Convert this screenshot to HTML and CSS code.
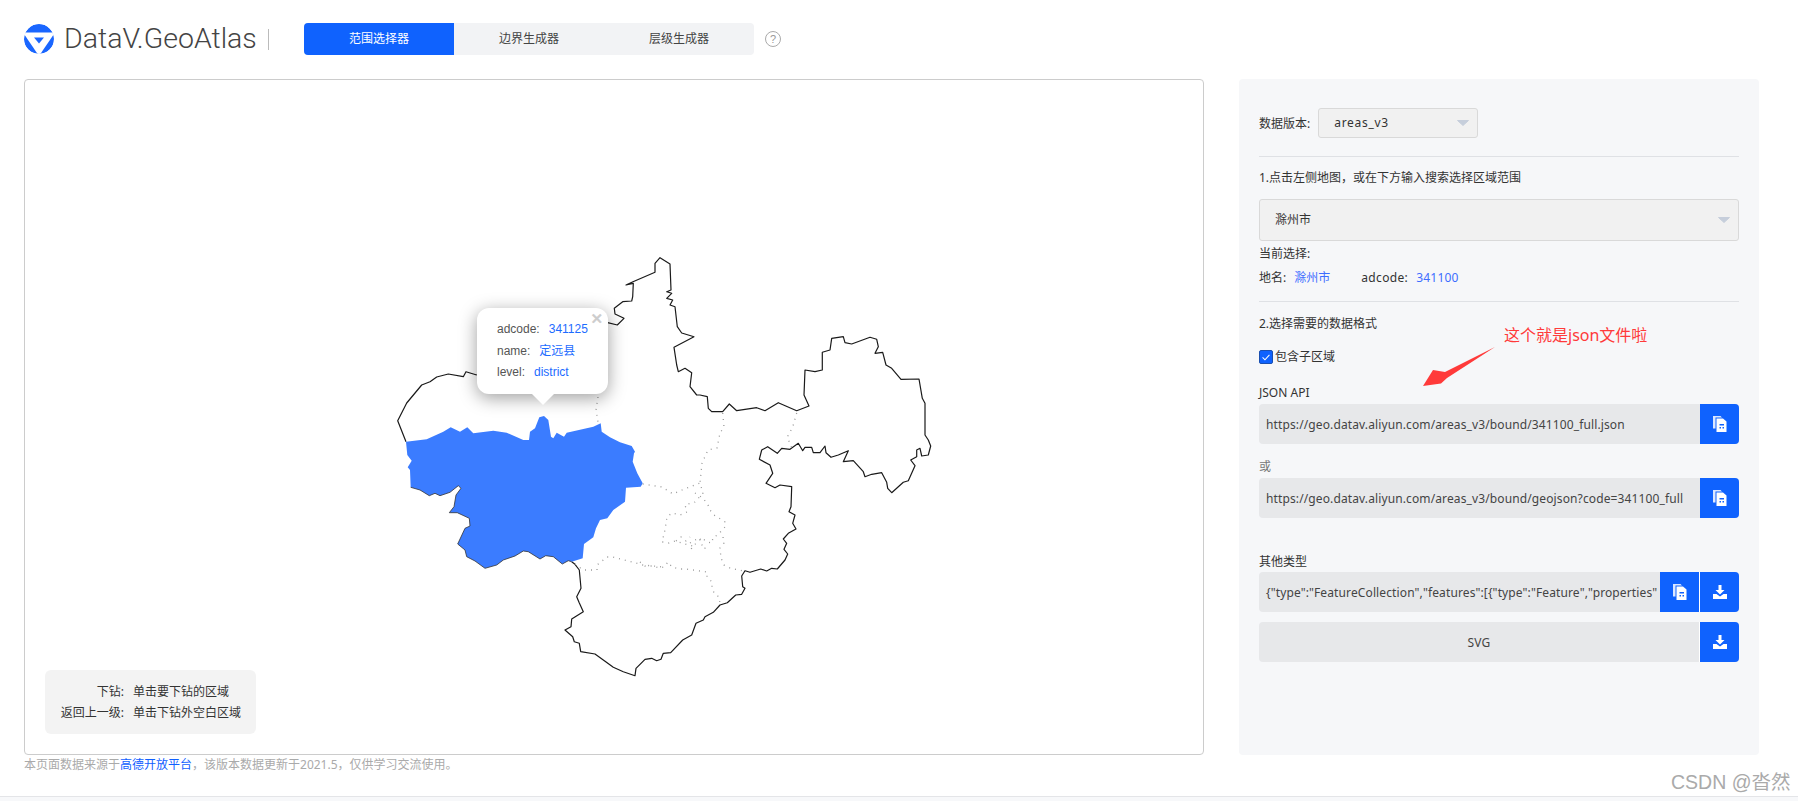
FILE: index.html
```html
<!DOCTYPE html>
<html lang="zh-CN">
<head>
<meta charset="utf-8">
<title>DataV.GeoAtlas</title>
<link rel="stylesheet" href="styles.css">
</head>
<body>
<svg class="defs" width="0" height="0" aria-hidden="true">
  <symbol id="i-copy" viewBox="0 0 14 16">
    <path d="M0 0h7.500l1.500 1.500H2.500v11H0z" fill="#dbe7ff"/>
    <path d="M3.500 2.500H10l3.500 3V16h-10z" fill="#fff"/>
    <path d="M6.500 8h4.500v1.500H6.500zM6.500 11h1.500v1.500H6.500zM9.500 11H11v1.500H9.500z" fill="#0f62fe"/>
  </symbol>
  <symbol id="i-down" viewBox="0 0 14 14">
    <path d="M5.500 0h3v5H11.500L7 9.500 2.500 5h3z" fill="#fff"/>
    <path d="M0 9h3.500L7 11.500 10.500 9H14v5H0z" fill="#fff"/>
  </symbol>
  <symbol id="i-caret" viewBox="0 0 12 6">
    <path d="M.5 .5h11L6 5.500z" fill="#c6cedb" stroke="#c6cedb" stroke-linejoin="round"/>
  </symbol>
</svg>

<header class="topbar">
  <svg class="logo" viewBox="0 0 30 30">
    <circle cx="15" cy="15" r="15" fill="#1a66ff"/>
    <path d="M-1 8.500H31L15 32z" fill="#fff"/>
    <path d="M10 13.500h10l-5 6z" fill="#1a66ff"/>
  </svg>
  <span class="brand">DataV.GeoAtlas</span>
  <span class="brand-sep"></span>
  <nav class="tabs">
    <a class="tab tab-active">范围选择器</a>
    <a class="tab">边界生成器</a>
    <a class="tab">层级生成器</a>
  </nav>
  <span class="help">?</span>
</header>

<main class="content">
  <section class="map-card">
    <svg class="map" viewBox="25 80 1178 674">
      <path class="outline" d="M476.700 375L607.700 322.700 617.300 325 624 318.300 615 314 614.300 308.300 622.700 301.700 631.700 301 632.700 296.700 633.300 283.300 626 285 633 281.700 655 272.300 655 263.300 660 257.700 670 264 671 290 666.700 291.700 671.700 293.300 666.700 298.300 672.700 300 670 305 675 306.700 677.300 326.700 681.700 333 694 336.700 674 347.300 676.700 365 678.300 371.700 685 368.300 691.700 372.700 690 386.700 696.700 395 700 395 707.300 396.700 708.300 408.300 711.700 411.700 722.700 411.700 729.300 404 736.700 410.700 756.700 407.700 765 410.700 778.300 402.700 796.700 410.700 809 406 804 395 805 370 815 371.700 822.300 370 822.300 352.300 830 350 831.700 338.300 843.300 336.700 845 342.700 851.700 344 870 337.300 876.700 339.300 878.300 346.700 875 353.300 882.700 352.300 886 365 891.700 368.300 901 379.300 919 379 922.300 398.300 925 403.300 925 435 928.300 440 930.700 446 928.300 455 921.700 456 920 448.300 916.700 450 916.700 456.700 910.700 460 915 465.700 908.300 480.700 903.300 482.300 891.700 492.700 887.700 488.300 886.700 482.300 881.700 472.700 871.700 474.300 865 476.700 863.300 471.700 853.300 460.700 843.300 461.700 848.300 450.700 838.300 455 831 457.300 826 452.700 825 446 820 452.700 813.300 452.700 811.700 447.300 805 447.300 802.700 450.700 798.300 443.300 790 449.300 781.700 448.300 777.300 453.300 767.700 446.700 761.700 450 759.300 459.300 770 465 772.700 473.300 766 483.300 775 487.700 780 485 791.700 486.700 791 506.700 789 511.700 795 515 792.700 523.300 796 529 788.300 533.300 783.300 539 786.700 543.300 784 549.300 787.700 554 785 560 777.300 569 771.700 568.300 766.700 571 760.700 569 750 572.300 745 570.700 741.700 576 742.700 586.700 745 588.300 741.700 594.300 735.700 595 727.300 602.700 720 605 713.300 612.300 705 616.700 703.300 620 696 623.300 691.700 635 682.700 640 670.700 652.700 663.300 653.300 661 659.300 656.700 660.700 651.700 658.300 645 659.300 636 668.300 635 675.700 623.300 671.700 613.300 667.300 603.300 660 595 654 580.700 651.700 579.300 643.300 574.300 641.700 572.700 636.700 565 630 571 626.700 571.700 619 583.300 611.700 579 602.300 576.700 596.700 581 588.300 579.300 570 575 564.300 571.700 561.700"/>
      <path class="outline" d="M406 441.700L397.700 420.700 406.700 403 421.700 385 430 381.700 436.700 377 448.300 374 463.300 376.700 466 371.700 476.700 375"/>
      <path class="region" d="M406 441.700L426.700 439.300 443.300 431.700 450.700 427.300 460 431.700 467.300 427.300 473.300 433.300 493.300 430.700 506.700 432.700 523.300 440 529 440 530 431.700 535 428.300 539.300 417.300 544 416 548.300 420 551 436.700 553.300 438.300 556.700 432.700 564 436.700 566.700 432.700 593.300 426.700 600.700 423.300 601.700 431.700 610 437.300 620 442.300 631.700 446 635 451.700 634 453.300 632.700 461.700 637.300 473.300 642.700 483.300 640.700 486.700 626 487.700 625 501.700 613.300 510 607.300 518.300 600 520 596 528.300 593.300 537.300 584 544 582.700 558.300 571.700 561.700 568.300 560.700 562.300 564 553.300 556.700 545.700 555.700 540 559 528.300 551.700 523.300 551 515 556 503.300 560 496.700 565 485 568.300 475 561 466.700 556.700 465 550 457.700 544 465 528.300 470 526 469.300 518.300 457.300 512.700 449.300 512.700 454 506.700 456 495 461 488.300 458.300 485.700 450 492.300 440 495.700 435 493.300 429.300 495.700 420 490 410.700 487.300 410 470 407.700 467.300 411.700 460.700 407.300 455z"/>
      <path class="outline-edge" d="M410.700 487.300L420 490 429.300 495.700 435 493.300 440 495.700 450 492.300 458.300 485.700 461 488.300 456 495 454 506.700 449.300 512.700 457.300 512.700 469.300 518.300 470 526 465 528.300 457.700 544 465 550 466.700 556.700 475 561 485 568.300 496.700 565 503.300 560 515 556 523.300 551 528.300 551.700 540 559 545.700 555.700 553.300 556.700 562.300 564 568.300 560.700 571.700 561.700"/>
      <path class="inner" d="M598 397L596 410 598 422M722.700 413L724 427 720 433 717 448 708 450 702 463 700 483M796.700 413L792.700 427 787.300 437 791.700 448M642.700 484L662 487 673 494 682 490 700 483 703 493 695 502 685 505 687 512 680 515 672 513 667 517 665 530 662 542 664 542 669 543 675 541 682 543 688 545 693 546 693 548"/>
      <path class="inner" d="M695 493L703 498 708 505 710 510 714 515 719 518 725 522 725 527 722 530 718 535 713 537 712 543 707 542 702 538 692 547 690 553M723 537L724 543 720 548 721 558 724 565 730 568 738 570 745 571"/>
      <path class="inner" d="M640 562L645 566 653 566 659 568 664 567 668 562 672 567 679 569 686 569 693 570 700 571 707 572 707 577 712 582 712 587 714 593 719 597 720 604"/>
      <path class="inner" d="M575 564L583 570 597 570 597 565 607 557 613 557 643 565 663 567"/>
      <path class="inner" d="M690 543L695 540 700 538 702 545 706 548 700 549M676 541L681 537 686 541 690 537"/>
    </svg>

    <div class="popup">
      <span class="popup-close">✕</span>
      <div class="popup-row">adcode:<b class="popup-val">341125</b></div>
      <div class="popup-row">name:<b class="popup-val">定远县</b></div>
      <div class="popup-row">level:<b class="popup-val">district</b></div>
    </div>

    <dl class="hint">
      <dt>下钻:</dt><dd>单击要下钻的区域</dd>
      <dt>返回上一级:</dt><dd>单击下钻外空白区域</dd>
    </dl>
  </section>

  <aside class="panel">
    <div class="version-row">
      <span class="version-label">数据版本:</span>
      <div class="select select-small"><span class="select-text">areas_v3</span><svg class="caret"><use href="#i-caret"/></svg></div>
    </div>
    <hr class="rule rule-first">
    <p class="line gap-11">1.点击左侧地图，或在下方输入搜索选择区域范围</p>
    <div class="select select-large gap-11"><span>滁州市</span><svg class="caret"><use href="#i-caret"/></svg></div>
    <p class="line gap-3">当前选择:</p>
    <p class="line gap-4"><span class="key">地名:</span><span class="link place">滁州市</span><span class="key key-latin">adcode:</span><span class="link link-latin">341100</span></p>
    <hr class="rule rule-second">
    <p class="line gap-12">2.选择需要的数据格式</p>
    <label class="check gap-13"><span class="box"><svg viewBox="0 0 14 14"><path d="M3 7.500l2.800 2.800L11 4.500" fill="none" stroke="#fff" stroke-width="1.200"/></svg></span>包含子区域</label>
    <p class="line gap-16">JSON API</p>
    <div class="field gap-1"><span class="field-text">https://geo.datav.aliyun.com/areas_v3/bound/341100_full.json</span><button class="btn"><svg class="ico"><use href="#i-copy"/></svg></button></div>
    <p class="line line-muted gap-13">或</p>
    <div class="field gap-1"><span class="field-text">https://geo.datav.aliyun.com/areas_v3/bound/geojson?code=341100_full</span><button class="btn"><svg class="ico"><use href="#i-copy"/></svg></button></div>
    <p class="line gap-34">其他类型</p>
    <div class="field"><span class="field-text">{"type":"FeatureCollection","features":[{"type":"Feature","properties"</span><button class="btn"><svg class="ico"><use href="#i-copy"/></svg></button><button class="btn btn-split"><svg class="ico"><use href="#i-down"/></svg></button></div>
    <div class="field gap-10"><span class="field-text field-center">SVG</span><button class="btn btn-split"><svg class="ico"><use href="#i-down"/></svg></button></div>
  </aside>
</main>

<p class="note">本页面数据来源于<a class="note-link">高德开放平台</a>，该版本数据更新于2021.5，仅供学习交流使用。</p>
<div class="bottom-bar"></div>

<div class="annotation">这个就是json文件啦</div>
<svg class="annotation-arrow" viewBox="0 0 80 44"><path d="M74 2L24 27 12 25 2 41 20 38.500 26 33z" fill="#ff3a3a"/></svg>
<div class="watermark">CSDN @沓然</div>
</body>
</html>
```

FILE: styles.css
```css
* { box-sizing: border-box; }
html, body { margin: 0; padding: 0; }
body {
  width: 1798px;
  height: 801px;
  overflow: hidden;
  position: relative;
  background: #fff;
  color: #333;
  font: 12px/20px "Noto Sans", "Noto Sans CJK SC", sans-serif;
}
.defs { position: absolute; }

/* header */
.topbar { display: flex; align-items: center; height: 32px; margin: 23px 0 0 24px; }
.logo { width: 30px; height: 30px; flex: none; border-radius: 50%; }
.brand {
  margin-left: 10px;
  width: 194px;
  font: 300 28.500px/32px Roboto, "Liberation Sans", sans-serif;
  color: #444;
  white-space: nowrap;
}
.brand-sep { width: 1px; height: 21px; margin-left: 10px; background: #bbb; }
.tabs { display: flex; margin-left: 35px; background: #f2f3f5; border-radius: 4px; overflow: hidden; }
.tab { width: 150px; height: 32px; line-height: 32px; text-align: center; color: #444; }
.tab-active { background: #0f62fe; color: #fff; }
.help {
  width: 16px; height: 16px; margin-left: 11px;
  border: 1px solid #aaa; border-radius: 50%;
  font: 11px/14px "Liberation Sans", sans-serif;
  text-align: center; color: #999;
}

/* main */
.content { display: flex; gap: 35px; margin: 24px 0 0 24px; height: 676px; }

.map-card {
  position: relative;
  width: 1180px;
  border: 1px solid #ccc;
  border-radius: 4px;
}
.map { position: absolute; left: 0; top: 0; width: 1178px; height: 674px; }
.outline, .outline-edge { fill: none; stroke: #1a1a1a; stroke-width: 1.2; stroke-linejoin: round; }
.outline-edge { stroke-width: .8; stroke: #333; }
.region { fill: #3b7cff; }
.inner { fill: none; stroke: #9a9a9a; stroke-width: 1.300; stroke-dasharray: 1 5; }

.popup {
  position: absolute;
  left: 452px; top: 228px;
  width: 131px; height: 86px;
  padding: 11px 0 0 20px;
  background: #fff;
  border-radius: 12px;
  box-shadow: 0 4px 18px rgba(0, 0, 0, .38);
  font: 12px/21.500px "Liberation Sans", "Noto Sans CJK SC", sans-serif;
  color: #555;
}
.popup::after {
  content: "";
  position: absolute;
  left: 55px; top: 86px;
  border: 11px solid transparent;
  border-top-color: #fff;
  border-bottom-width: 0;
}
.popup-val { margin-left: 9px; font-weight: 400; color: #1d6cff; }
.popup-close {
  position: absolute; right: 5px; top: 0;
  font: 700 15px/22px "DejaVu Sans", sans-serif;
  -webkit-text-stroke: .6px #ccc;
  color: #ccc;
}

.hint {
  position: absolute;
  left: 20px; bottom: 20px;
  width: 211px; height: 64px;
  margin: 0;
  padding: 11px 0 0;
  display: grid;
  grid-template-columns: 79px 1fr;
  column-gap: 9px;
  grid-auto-rows: 21px;
  background: #f3f3f3;
  border-radius: 6px;
  line-height: 21px;
}
.hint dt { text-align: right; white-space: nowrap; }
.hint dd { margin: 0; white-space: nowrap; }

/* panel */
.panel {
  width: 520px;
  padding: 29px 20px 0 20px;
  background: #f6f7f9;
  border-radius: 4px;
}
.version-row { display: flex; align-items: center; gap: 8px; height: 30px; }
.version-label { padding-top: 2px; }
.select {
  display: flex; align-items: center; justify-content: space-between;
  background: #f1f1f1;
  border: 1px solid #d9d9d9;
  border-radius: 3px;
}
.select-small { width: 160px; height: 30px; padding: 0 8px 0 15px; }
.select-text { letter-spacing: .7px; }
.select-large { height: 42px; padding: 0 8px 0 15px; }
.caret { width: 12px; height: 6px; }
.rule { margin: 0; border: 0; height: 1px; background: #dfe1e5; }
.rule-first { margin-top: 18px; }
.rule-second { margin-top: 13px; }
.line { margin: 0; height: 20px; white-space: nowrap; }
.line-muted { color: #777; }
.key { margin-right: 8px; }
.key-latin { letter-spacing: .35px; }
.link { color: #3d6dff; }
.link-latin { letter-spacing: .2px; }
.place { margin-right: 31px; }
.check { display: flex; align-items: center; gap: 2px; height: 20px; }
.box { width: 14px; height: 14px; background: #0f62fe; border: 1px solid #1a4fb0; border-radius: 2px; display: flex; }
.box svg { width: 12px; height: 12px; }
.field {
  display: flex; height: 40px;
  background: #e7e8ea;
  border-radius: 4px;
  overflow: hidden;
}
.field-text {
  flex: 1; min-width: 0;
  padding: 0 7px;
  line-height: 42px;
  letter-spacing: .12px;
  white-space: nowrap;
  overflow: hidden;
  color: #444;
}
.field-center { text-align: center; }
.btn {
  flex: none;
  width: 39px; padding: 0;
  display: flex; align-items: center; justify-content: center;
  background: #0f62fe;
  border: 0;
}
.btn-split { width: 40px; border-left: 1px solid #fff; }
.ico { width: 14px; height: 16px; }

.gap-1 { margin-top: 1px; }
.gap-3 { margin-top: 3px; }
.gap-4 { margin-top: 4px; }
.gap-10 { margin-top: 10px; }
.gap-11 { margin-top: 11px; }
.gap-12 { margin-top: 12px; }
.gap-13 { margin-top: 13px; }
.gap-16 { margin-top: 16px; }
.gap-34 { margin-top: 34px; }

/* footer */
.note { margin: 0 0 0 24px; height: 20px; color: #aaa; line-height: 20px; }
.note-link { color: #1060ff; }
.bottom-bar { margin-top: 21px; height: 5px; background: #f7f8fa; border-top: 1px solid #e4e5e8; }

/* overlays */
.annotation {
  position: absolute; left: 1504px; top: 323px;
  font-size: 16px; line-height: 24px;
  color: #ff3a3a;
  white-space: nowrap;
}
.annotation-arrow { position: absolute; left: 1421px; top: 345px; width: 80px; height: 44px; }
.watermark {
  position: absolute; left: 1671px; top: 770px;
  font: 19.500px/24px "Liberation Sans", "Noto Sans CJK SC", sans-serif;
  color: #aaa;
  white-space: nowrap;
}
```
